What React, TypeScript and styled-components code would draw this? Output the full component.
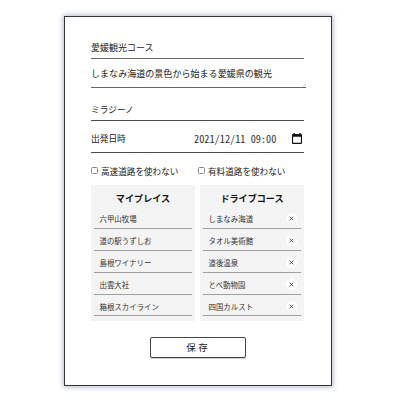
import React from 'react';
import styled, { createGlobalStyle } from 'styled-components';

const GlobalStyle = createGlobalStyle`
  *, *::before, *::after { box-sizing: border-box; }
  body {
    margin: 0;
    background: #fff;
    color: #222;
    font-family: "Noto Sans CJK JP", sans-serif;
  }
`;

const Page = styled.main`
  width: 400px;
  height: 400px;
  padding: 16px 68px 0 64px;
  overflow: hidden;
`;

const Card = styled.form`
  display: flex;
  flex-direction: column;
  width: 268px;
  height: 370px;
  padding: 20px 26px 0;
  border: 1px solid #34343c;
  background: #fff;
  box-shadow: 0 0 5px 1px rgba(65, 80, 120, 0.4);
`;

const Field = styled.div<{ $height: number; $wide?: boolean; $line?: string; $top?: number; $size?: number }>`
  position: relative;
  display: flex;
  align-items: center;
  flex: none;
  height: ${(p) => p.$height}px;
  width: ${(p) => (p.$wide ? 215 : 213)}px;
  padding-top: ${(p) => p.$top ?? 0}px;
  border-bottom: 1px solid ${(p) => p.$line ?? '#4a4a4a'};
  font-size: ${(p) => p.$size ?? 9}px;
  line-height: 12px;
  white-space: nowrap;
`;

const Grip = styled.svg`
  position: absolute;
  right: 0;
  bottom: 0;
`;

const Label = styled.span`
  width: 35px;
`;

const DateValue = styled.span`
  width: 83px;
  margin-left: 68px;
  font-size: 10.3px;
  font-feature-settings: "hwid" 1;
  font-kerning: none;
  color: #333;
  white-space: pre;
`;

const CalendarIcon = styled.svg`
  margin-left: auto;
  margin-right: 2px;
`;

const Options = styled.div`
  display: flex;
  height: 32px;
  padding-top: 3px;
  align-items: center;
`;

const Option = styled.label`
  display: flex;
  align-items: center;
  width: 107px;
  gap: 3px;
  font-size: 8.6px;
  line-height: 12px;
  white-space: nowrap;
`;

const Box = styled.input`
  appearance: none;
  width: 7px;
  height: 7px;
  margin: 0;
  border: 1px solid #858585;
  border-radius: 1.5px;
  background: #fff;
`;

const Columns = styled.div`
  display: grid;
  grid-template-columns: 104px 104px;
  gap: 5px;
`;

const Panel = styled.section`
  height: 136px;
  padding: 0 3px;
  background: #f4f4f4;
`;

const PanelTitle = styled.h2`
  margin: 0;
  height: 22px;
  padding-top: 7px;
  font-size: 9.1px;
  line-height: 12px;
  font-weight: 700;
  text-align: center;
  color: #111;
`;

const List = styled.ul`
  margin: 0;
  padding: 0;
  list-style: none;
`;

const Item = styled.li`
  display: flex;
  align-items: center;
  justify-content: space-between;
  height: 21.9px;
  padding: 3px 4.5px 0 5.5px;
  border-bottom: 1px solid #a0a0a0;
  font-size: 7.45px;
  line-height: 10px;
  color: #333;
`;

const Remove = styled.button`
  display: grid;
  place-items: center;
  width: 11px;
  height: 11px;
  padding: 0;
  border: 0;
  border-radius: 50%;
  background: #fff;
`;

const Save = styled.button`
  width: 96px;
  height: 21px;
  margin: 16px 0 0 59px;
  padding: 0 2px 0 0;
  border: 1px solid #444;
  border-radius: 2px;
  background: #fff;
  box-shadow: 0 1px 0 rgba(0, 0, 0, 0.18);
  color: #222;
  font-family: inherit;
  font-size: 9.5px;
  line-height: 19px;
  word-spacing: 0.5px;
`;

const places = ['六甲山牧場', '道の駅うずしお', '島根ワイナリー', '出雲大社', '箱根スカイライン'];
const course = ['しまなみ海道', 'タオル美術館', '道後温泉', 'とべ動物園', '四国カルスト'];

export default function App() {
  return (
    <>
      <GlobalStyle />
      <Page lang="ja">
        <Card>
          <Field $height={22} $line="#666">愛媛観光コース</Field>
          <Field $height={29} $wide $line="#666" $top={2} $size={9.05}>
            しまなみ海道の景色から始まる愛媛県の観光
            <Grip width="3" height="3" viewBox="0 0 3 3">
              <path d="M0 3 3 0" stroke="#aaa" strokeWidth=".6" />
            </Grip>
          </Field>
          <Field $height={33} $top={11} $size={8.7}>ミラジーノ</Field>
          <Field $height={32} $top={4} $size={8.7}>
            <Label>出発日時</Label>
            <DateValue>2021/12/11 09:00</DateValue>
            <CalendarIcon width="10" height="11" viewBox="0 0 10 11">
              <path fill="#111" fillRule="evenodd" d="M1.5 0h1.3v1h4.4V0h1.3v1H9a1 1 0 0 1 1 1v8a1 1 0 0 1-1 1H1a1 1 0 0 1-1-1V2a1 1 0 0 1 1-1h.5zM1.1 3.8v6h7.8v-6z" />
            </CalendarIcon>
          </Field>
          <Options>
            <Option><Box type="checkbox" />高速道路を使わない</Option>
            <Option><Box type="checkbox" />有料道路を使わない</Option>
          </Options>
          <Columns>
            <Panel>
              <PanelTitle>マイプレイス</PanelTitle>
              <List>{places.map((name) => <Item key={name}>{name}</Item>)}</List>
            </Panel>
            <Panel>
              <PanelTitle>ドライブコース</PanelTitle>
              <List>
                {course.map((name) => (
                  <Item key={name}>
                    {name}
                    <Remove type="button" aria-label="削除">
                      <svg width="5" height="5" viewBox="0 0 5 5">
                        <path d="m.7.7 3.6 3.6m0-3.6L.7 4.3" stroke="#333" strokeWidth=".8" />
                      </svg>
                    </Remove>
                  </Item>
                ))}
              </List>
            </Panel>
          </Columns>
          <Save type="button">保 存</Save>
        </Card>
      </Page>
    </>
  );
}
